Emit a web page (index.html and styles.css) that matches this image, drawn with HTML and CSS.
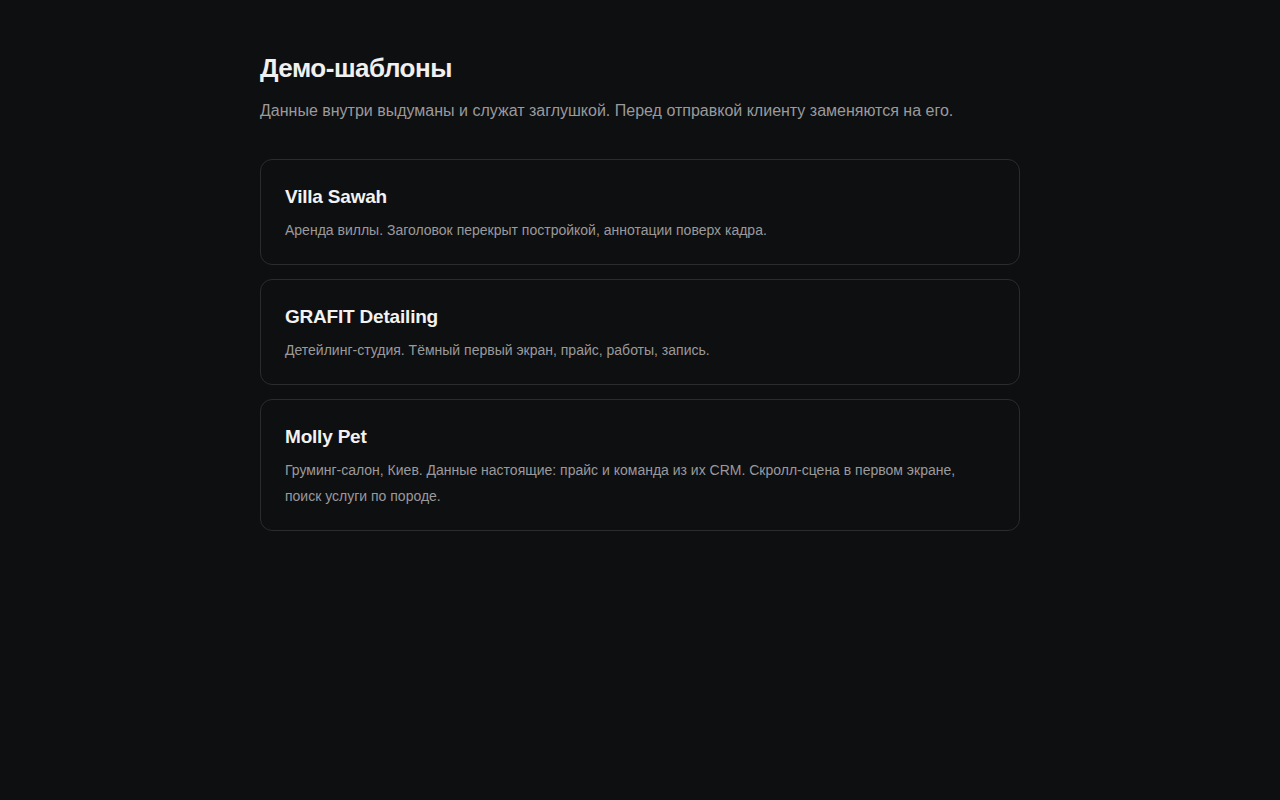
FILE: index.html
```html
<!DOCTYPE html>
<html lang="ru">
<head>
<meta charset="utf-8">
<title>Демо-шаблоны</title>
<link rel="stylesheet" href="styles.css">
</head>
<body>
<main class="page">
  <h1 class="title">Демо-шаблоны</h1>
  <p class="lead">Данные внутри выдуманы и служат заглушкой. Перед отправкой клиенту заменяются на его.</p>
  <div class="list">
    <a class="card" href="#">
      <h2 class="card-title">Villa Sawah</h2>
      <p class="card-desc">Аренда виллы. Заголовок перекрыт постройкой, аннотации поверх кадра.</p>
    </a>
    <a class="card" href="#">
      <h2 class="card-title">GRAFIT Detailing</h2>
      <p class="card-desc">Детейлинг-студия. Тёмный первый экран, прайс, работы, запись.</p>
    </a>
    <a class="card" href="#">
      <h2 class="card-title">Molly Pet</h2>
      <p class="card-desc">Груминг-салон, Киев. Данные настоящие: прайс и команда из их CRM. Скролл-сцена в первом экране, поиск услуги по породе.</p>
    </a>
  </div>
</main>
</body>
</html>
```
FILE: styles.css
```css
html, body {
  margin: 0;
  background: #0e0f11;
}
body {
  font-family: "Liberation Sans", Arial, sans-serif;
  color: #ededed;
}
.page {
  width: 760px;
  margin: 0 auto;
  padding-top: 53px;
}
.title {
  margin: 0;
  font-size: 26px;
  line-height: 1.2;
  font-weight: 700;
  letter-spacing: -0.5px;
  color: #f0f0f0;
}
.lead {
  margin: 15px 0 0;
  font-size: 16px;
  line-height: 1.5;
  color: #9a9a9c;
}
.list {
  margin-top: 36px;
  display: flex;
  flex-direction: column;
  gap: 14px;
}
.card {
  display: block;
  text-decoration: none;
  border: 1px solid #2b2c30;
  border-radius: 12px;
  padding: 23px 24px 21px;
  background: #0e0f11;
}
.card-title {
  margin: 0 0 7px;
  font-size: 19px;
  line-height: 27px;
  font-weight: 700;
  letter-spacing: -0.2px;
  color: #f2f2f2;
}
.card-desc {
  margin: 0;
  font-size: 14px;
  line-height: 26px;
  color: #9a9a9c;
}
```
